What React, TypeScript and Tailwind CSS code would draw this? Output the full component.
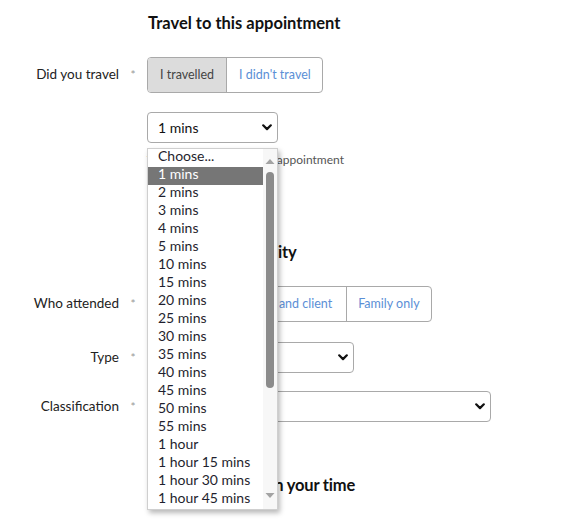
import React from "react";

const Chevron = ({ className = "" }: { className?: string }) => (
  <svg width="10" height="7" viewBox="0 0 10 7" className={className}>
    <polyline points="1.2,1.3 5,5.1 8.8,1.3" fill="none" stroke="#111" strokeWidth="2.2" strokeLinecap="round" strokeLinejoin="round" />
  </svg>
);

const Label = ({ text }: { text: string }) => (
  <>
    <div className="text-right text-[13.5px] leading-[18px] text-[#222] self-center -translate-y-px">{text}</div>
    <div className="text-center text-[12px] leading-[18px] text-[#999] self-center">*</div>
  </>
);

const SelectBox = ({ width, value }: { width: string; value: string }) => (
  <div className={`${width} h-[31px] border border-[#a9a9a9] rounded-[4px] bg-white flex items-center justify-between pl-[10px] pr-[5px]`}>
    <span className="text-[14px] leading-[18px] text-[#111]">{value}</span>
    <Chevron />
  </div>
);

const options = [
  "Choose...",
  "1 mins",
  "2 mins",
  "3 mins",
  "4 mins",
  "5 mins",
  "10 mins",
  "15 mins",
  "20 mins",
  "25 mins",
  "30 mins",
  "35 mins",
  "40 mins",
  "45 mins",
  "50 mins",
  "55 mins",
  "1 hour",
  "1 hour 15 mins",
  "1 hour 30 mins",
  "1 hour 45 mins",
];

export default function App() {
  return (
    <div className="w-[572px] h-[524px] bg-white overflow-hidden font-['Lato',sans-serif] text-[#222]">
      <div className="grid grid-cols-[119px_28px_1fr] pt-[11px]">
        {/* Heading 1 */}
        <div className="col-start-3 text-[16.5px] leading-[24px] font-bold text-[#111] pl-px">Travel to this appointment</div>

        {/* Did you travel */}
        <div className="col-span-3 h-[22px]" />
        <Label text="Did you travel" />
        <div className="flex">
          <div className="flex h-[36px] border border-[#a9a9a9] rounded-[4px] overflow-hidden text-[12.5px]">
            <div className="bg-[#dcdcdc] text-[#444] px-[12px] flex items-center">I travelled</div>
            <div className="border-l border-[#a9a9a9] text-[#5b8fd6] pl-[12px] pr-[11px] flex items-center">I didn't travel</div>
          </div>
        </div>

        {/* time select + dropdown */}
        <div className="col-span-3 h-[19px]" />
        <div className="col-start-3 relative">
          <SelectBox width="w-[131px]" value="1 mins" />
          <div className="mt-[8px] text-[12px] leading-[18px] text-[#555] whitespace-nowrap">Time taken to get to the appointment</div>

          <div className="absolute z-10 left-0 top-[36px] w-[131px] h-[362px] bg-white border border-[#cfcfcf] shadow-[2px_3px_5px_rgba(0,0,0,0.28)] flex">
            <div className="w-[115px] flex flex-col">
              {options.map((o, i) => (
                <div
                  key={o}
                  className={`h-[18px] pl-[10px] text-[14px] leading-[12px] whitespace-nowrap ${i === 1 ? "bg-[#767676] text-white" : "text-[#1f1f2e]"}`}
                >
                  <span className="block pt-[1px]">{o}</span>
                </div>
              ))}
            </div>
            <div className="w-[14px] bg-[#f7f7f7] relative">
              <svg width="14" height="360" className="absolute left-0 top-0">
                <polygon points="7,10 2.5,15 11.5,15" fill="#a3a3a3" />
                <rect x="3" y="23" width="8" height="216" rx="4" fill="#8b8b8b" />
                <polygon points="2.5,344 11.5,344 7,349" fill="#a3a3a3" />
              </svg>
            </div>
          </div>
        </div>

        {/* Heading 2 */}
        <div className="col-span-3 h-[71px]" />
        <div className="col-start-3 text-[16.5px] leading-[24px] font-bold text-[#111] pl-px tracking-[-0.15px]">Describe the activity</div>

        {/* Who attended */}
        <div className="col-span-3 h-[22px]" />
        <Label text="Who attended" />
        <div className="flex">
          <div className="flex h-[36px] border border-[#a9a9a9] rounded-[4px] overflow-hidden text-[12.5px] text-[#5b8fd6]">
            <div className="px-[12px] flex items-center">Client only</div>
            <div className="border-l border-[#a9a9a9] px-[14px] flex items-center">Carer and client</div>
            <div className="border-l border-[#a9a9a9] px-[11px] flex items-center">Family only</div>
          </div>
        </div>

        {/* Type */}
        <div className="col-span-3 h-[20px]" />
        <Label text="Type" />
        <div>
          <SelectBox width="w-[207px]" value="Choose..." />
        </div>

        {/* Classification */}
        <div className="col-span-3 h-[18px]" />
        <Label text="Classification" />
        <div>
          <SelectBox width="w-[344px]" value="Choose..." />
        </div>

        {/* Heading 3 */}
        <div className="col-span-3 h-[51px]" />
        <div className="col-start-3 text-[16.5px] leading-[24px] font-bold text-[#111] pl-px tracking-[-0.2px]">What did you do in your time</div>
      </div>
    </div>
  );
}
